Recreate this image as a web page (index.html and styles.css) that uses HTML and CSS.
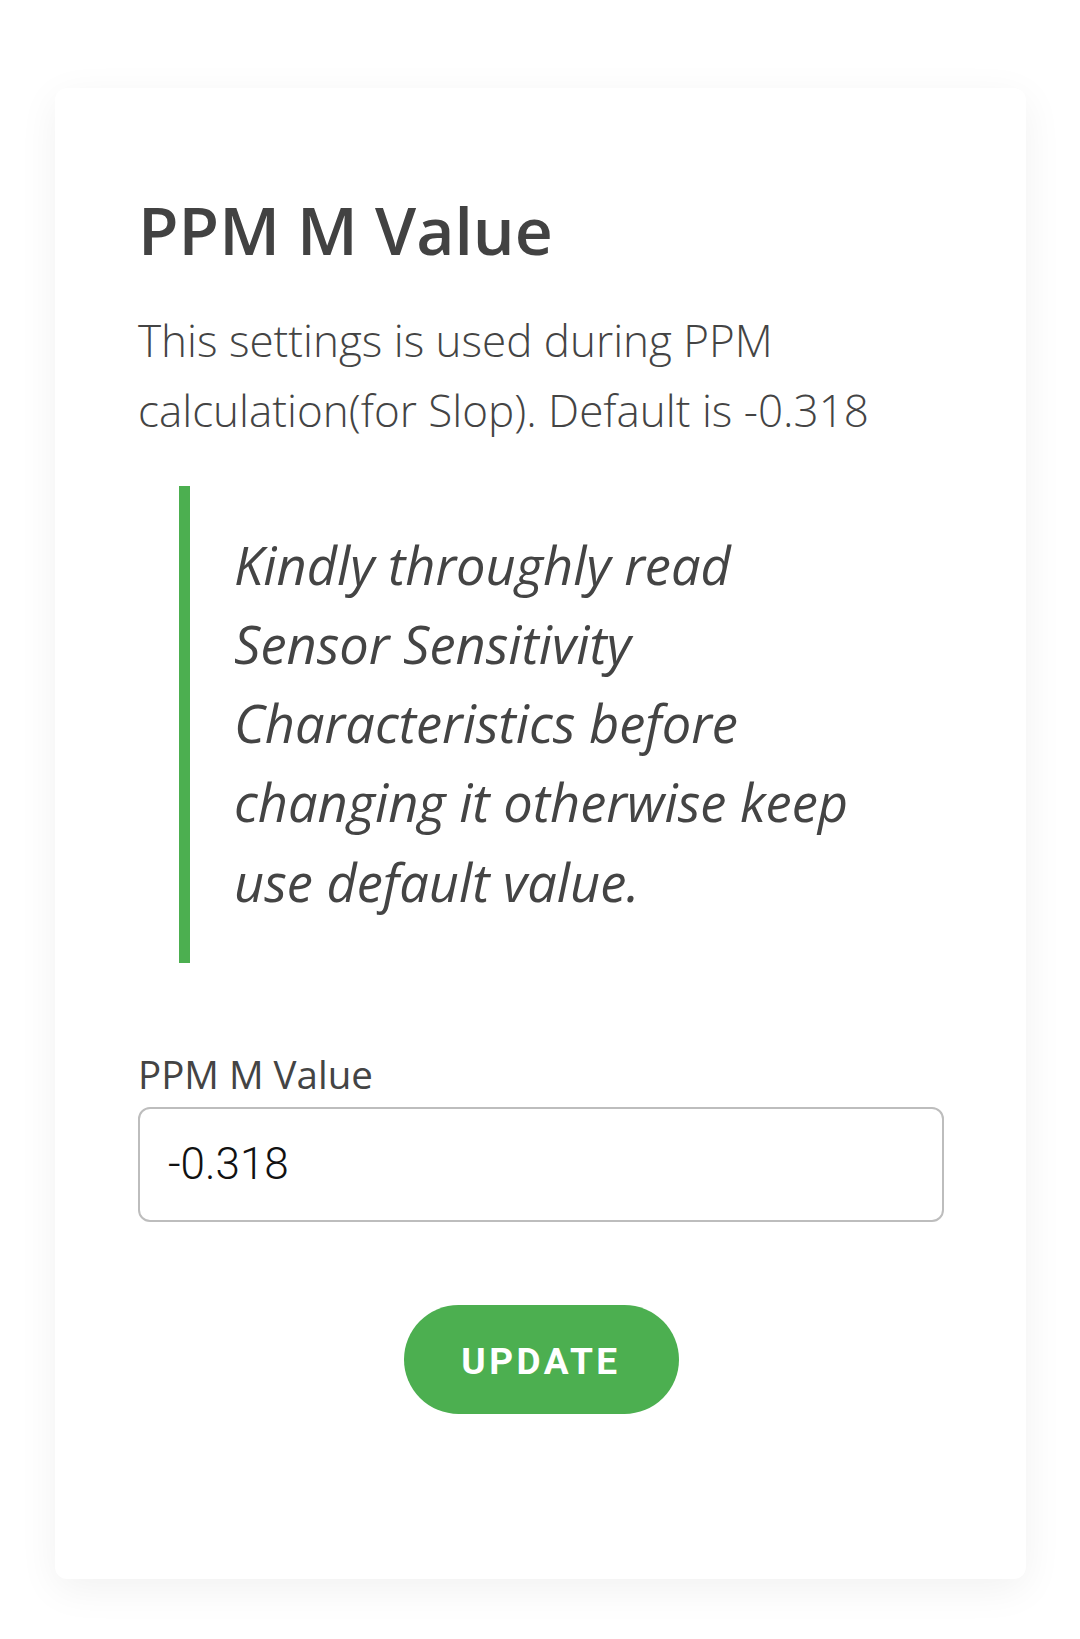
FILE: index.html
```html
<!DOCTYPE html>
<html lang="en">
<head>
<meta charset="utf-8">
<title>PPM M Value</title>
<link rel="stylesheet" href="styles.css">
</head>
<body>
  <main class="card">
    <h1 class="card-title">PPM M Value</h1>
    <p class="card-desc">This settings is used during PPM calculation(for Slop). Default is -0.318</p>
    <blockquote class="note">Kindly throughly read Sensor Sensitivity Characteristics before changing it otherwise keep use default value.</blockquote>
    <form class="form">
      <label class="field-label" for="ppm-m">PPM M Value</label>
      <input class="field-input" id="ppm-m" type="text" value="-0.318">
      <div class="actions">
        <button class="btn" type="button">UPDATE</button>
      </div>
    </form>
  </main>
</body>
</html>
```

FILE: styles.css
```css
* { box-sizing: border-box; }

html, body {
  margin: 0;
  padding: 0;
  background: #ffffff;
}

body {
  font-family: "Open Sans", "Liberation Sans", sans-serif;
  color: #444444;
  padding: 88px 54px 60px 55px;
}

.card {
  display: block;
  background: #ffffff;
  border-radius: 12px;
  box-shadow: 0 10px 40px rgba(0, 0, 0, 0.06);
  padding: 102px 82px 165px 83px;
}

.card-title {
  margin: 0;
  font-size: 66px;
  line-height: 79px;
  font-weight: 600;
  color: #424242;
}

.card-desc {
  margin: 36px 0 0;
  font-size: 44px;
  line-height: 70.4px;
  font-weight: 300;
  color: #444444;
}

.note {
  margin: 40px 41px 0 41px;
  padding: 39px 27px 42px 44px;
  border-left: 11px solid #4caf50;
  font-size: 52.4px;
  line-height: 79.2px;
  font-style: italic;
  font-weight: 400;
  color: #444444;
}

.form {
  display: flex;
  flex-direction: column;
  margin-top: 83px;
}

.field-label {
  font-size: 38.5px;
  line-height: 57.75px;
  font-weight: 400;
  color: #444444;
}

.field-input {
  margin-top: 3px;
  width: 100%;
  height: 115px;
  border: 2px solid #bdbdbd;
  border-radius: 12px;
  padding: 0 28px;
  font-family: Roboto, "Liberation Sans", sans-serif;
  font-size: 44px;
  font-weight: 300;
  color: #111111;
  background: #ffffff;
  outline: none;
}

.actions {
  display: flex;
  justify-content: center;
  margin-top: 83px;
}

.btn {
  width: 275px;
  height: 109px;
  border: none;
  border-radius: 55px;
  background: #4caf50;
  color: #ffffff;
  font-family: Roboto, "Liberation Sans", sans-serif;
  font-size: 37px;
  font-weight: 700;
  letter-spacing: 3.5px;
  padding: 4px 0 0;
  cursor: pointer;
}
```
